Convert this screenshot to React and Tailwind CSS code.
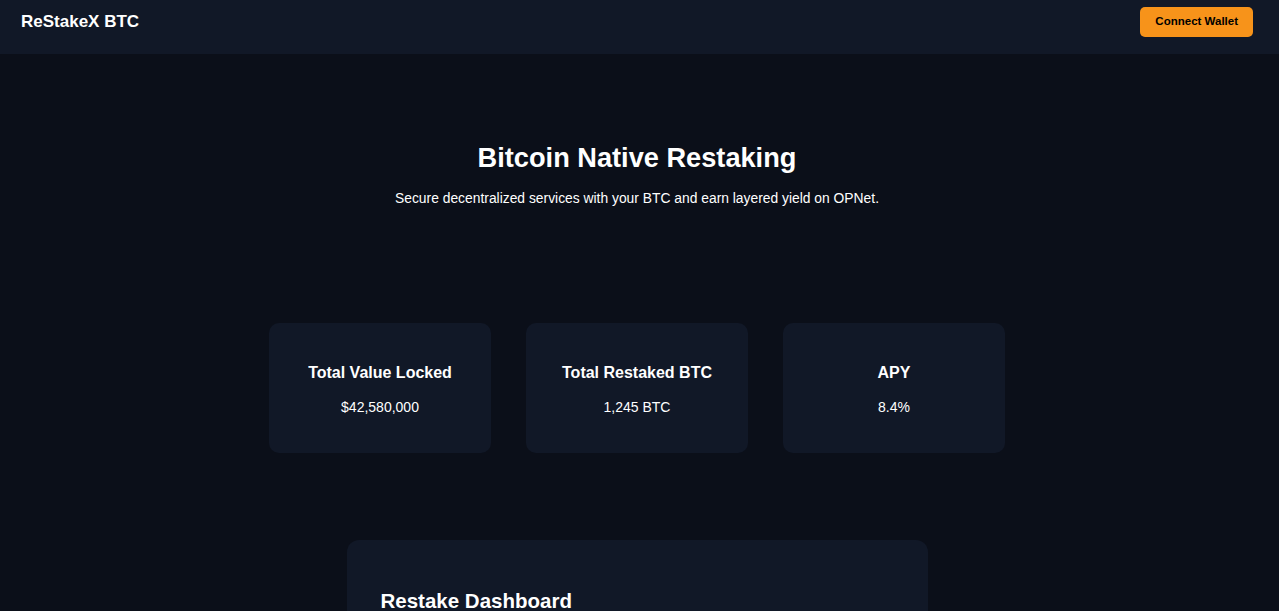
import React from "react";

const stats = [
  { label: "Total Value Locked", value: "$42,580,000" },
  { label: "Total Restaked BTC", value: "1,245 BTC" },
  { label: "APY", value: "8.4%" },
];

const StatCard = ({ label, value }) => (
  <div className="flex h-[130px] w-[222px] flex-col items-center justify-center rounded-[10px] bg-[#111827]">
    <h3 className="mb-[11px] text-[16px] leading-[26px] font-bold">{label}</h3>
    <p className="text-[14px] leading-5">{value}</p>
  </div>
);

export default function App() {
  return (
    <div
      className="min-h-screen bg-[#0b0f19] text-white"
      style={{ fontFamily: '"Liberation Sans", Arial, sans-serif' }}
    >
      <header className="flex h-[54px] items-start justify-between bg-[#111827] pt-[7px] pr-[26px] pl-[21px]">
        <h1 className="text-[17px] leading-[30px] font-bold">ReStakeX BTC</h1>
        <button className="h-[30px] rounded-[5px] bg-[#f7931a] px-[15px] text-[11.5px] font-bold text-black">
          Connect Wallet
        </button>
      </header>

      <main className="pr-[5px]">
        <section className="pt-[87px] text-center">
          <h2 className="mb-[14px] text-[27.2px] leading-[33px] font-bold">
            Bitcoin Native Restaking
          </h2>
          <p className="text-[13.85px] leading-5">
            Secure decentralized services with your BTC and earn layered yield on OPNet.
          </p>
        </section>

        <section className="mt-[115px] flex justify-center gap-[35px]">
          {stats.map((s) => (
            <StatCard key={s.label} {...s} />
          ))}
        </section>

        <section className="mt-[87px] flex justify-center pb-10">
          <div className="w-[581px] rounded-xl bg-[#111827] px-[34px] pt-[49px] pb-8">
            <h2 className="text-[20.5px] leading-6 font-bold">Restake Dashboard</h2>
            <div className="h-40" />
          </div>
        </section>
      </main>
    </div>
  );
}
